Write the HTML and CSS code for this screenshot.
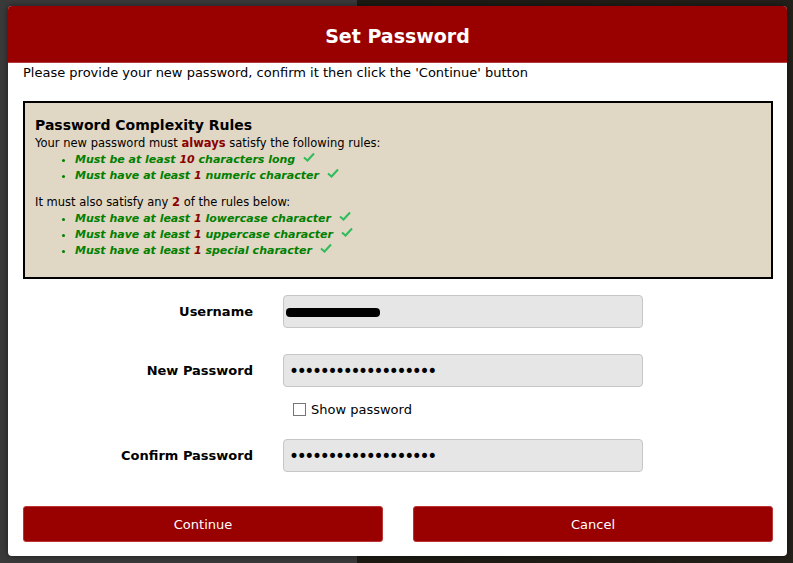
FILE: index.html
```html
<!DOCTYPE html>
<html>
<head>
<meta charset="utf-8">
<link rel="stylesheet" href="styles.css">
</head>
<body>
<div class="backdrop">
  <div class="dialog">
    <div class="dialog-header">Set Password</div>
    <div class="dialog-body">
      <p class="intro">Please provide your new password, confirm it then click the 'Continue' button</p>
      <div class="rules">
        <h3 class="rules-title">Password Complexity Rules</h3>
        <p class="rules-text">Your new password must <b class="hl">always</b> satisfy the following rules:</p>
        <ul class="rule-list">
          <li>Must be at least <span class="num">10</span> characters long <svg class="check" viewBox="0 0 12 10"><path d="M1 5.5 L4.5 8.5 L11 1.5"/></svg></li>
          <li>Must have at least <span class="num">1</span> numeric character <svg class="check" viewBox="0 0 12 10"><path d="M1 5.5 L4.5 8.5 L11 1.5"/></svg></li>
        </ul>
        <p class="rules-text gap">It must also satisfy any <b class="hl">2</b> of the rules below:</p>
        <ul class="rule-list">
          <li>Must have at least <span class="num">1</span> lowercase character <svg class="check" viewBox="0 0 12 10"><path d="M1 5.5 L4.5 8.5 L11 1.5"/></svg></li>
          <li>Must have at least <span class="num">1</span> uppercase character <svg class="check" viewBox="0 0 12 10"><path d="M1 5.5 L4.5 8.5 L11 1.5"/></svg></li>
          <li>Must have at least <span class="num">1</span> special character <svg class="check" viewBox="0 0 12 10"><path d="M1 5.5 L4.5 8.5 L11 1.5"/></svg></li>
        </ul>
      </div>
      <div class="form">
        <div class="row row-user">
          <label class="label">Username</label>
          <div class="field"><span class="redact"></span></div>
        </div>
        <div class="row row-new">
          <label class="label">New Password</label>
          <input class="field pw" type="password" value="aaaaaaaaaaaaaaaaaaa">
        </div>
        <div class="row row-show">
          <div class="label"></div>
          <label class="show"><span class="box"></span>Show password</label>
        </div>
        <div class="row row-confirm">
          <label class="label">Confirm Password</label>
          <input class="field pw" type="password" value="aaaaaaaaaaaaaaaaaaa">
        </div>
      </div>
      <div class="buttons">
        <button class="btn">Continue</button>
        <button class="btn">Cancel</button>
      </div>
    </div>
  </div>
</div>
</body>
</html>
```
FILE: styles.css
```css
html, body {
  margin: 0;
  padding: 0;
}
body {
  width: 793px;
  height: 563px;
  overflow: hidden;
  background: linear-gradient(to right, #3a3a3a 0, #3a3a3a 45%, #1c1a13 45%, #24201a 100%);
  font-family: "DejaVu Sans", Verdana, sans-serif;
}
.backdrop {
  padding: 6px 6px 0 8px;
}
.dialog {
  width: 779px;
  height: 550px;
  background: #fff;
  border-radius: 4px;
  overflow: hidden;
  box-shadow: 0 0 6px rgba(0,0,0,0.5);
}
.dialog-header {
  height: 57px;
  background: #990000;
  color: #fff;
  font-weight: bold;
  font-size: 19px;
  line-height: 61px;
  text-align: center;
  border-bottom: 1px solid #b23a3a;
  box-sizing: border-box;
}
.dialog-body {
  padding: 2px 14px 0 15px;
}
.intro {
  margin: 0;
  font-size: 13px;
  line-height: 16px;
  color: #000;
}
.rules {
  margin-top: 20px;
  height: 178px;
  box-sizing: border-box;
  border: 2px solid #000;
  background: #e0d7c4;
  padding: 12px 10px 0 10px;
}
.rules-title {
  margin: 0;
  font-size: 14px;
  line-height: 20px;
  font-weight: bold;
  color: #000;
}
.rules-text {
  margin: 0;
  font-size: 11.5px;
  line-height: 16px;
  color: #000;
}
.rules-text.gap {
  margin-top: 11px;
}
.hl {
  color: #8b0000;
}
.rule-list {
  margin: 0;
  padding-left: 40px;
  font-size: 11px;
  line-height: 16px;
  font-weight: bold;
  font-style: italic;
  color: #008000;
}
.rule-list li {
  height: 16px;
  box-sizing: border-box;
  padding-top: 1px;
}
.num {
  color: #8b0000;
}
.check {
  width: 12px;
  height: 10px;
  margin-left: 4px;
  vertical-align: 1px;
}
.check path {
  fill: none;
  stroke: #2ebd5a;
  stroke-width: 2;
}
.form {
  display: flex;
  flex-direction: column;
}
.row {
  display: flex;
  align-items: center;
  gap: 30px;
}
.row-user { margin-top: 16px; }
.row-new { margin-top: 26px; }
.row-show { margin-top: 14px; height: 16px; }
.row-confirm { margin-top: 22px; }
.label {
  width: 230px;
  text-align: right;
  font-size: 13px;
  font-weight: bold;
  color: #000;
}
.field {
  width: 360px;
  height: 33px;
  box-sizing: border-box;
  background: #e6e6e6;
  border: 1px solid #c6c6c6;
  border-radius: 4px;
  padding: 0 6px;
  font-family: "DejaVu Sans", Verdana, sans-serif;
  font-size: 13px;
  color: #000;
  display: flex;
  align-items: center;
  outline: none;
}
.field.pw {
  font-size: 17px;
  letter-spacing: -2.35px;
  padding-left: 5px;
}
.redact {
  display: block;
  width: 94px;
  height: 9px;
  margin-left: -4px;
  margin-top: 2px;
  background: #000;
  border-radius: 4px;
}
.show {
  display: flex;
  align-items: center;
  font-size: 13px;
  color: #000;
  margin-left: 10px;
}
.show .box {
  width: 11px;
  height: 11px;
  border: 1px solid #767676;
  background: #fff;
  margin-right: 5px;
}
.buttons {
  margin-top: 34px;
  display: flex;
  gap: 30px;
}
.btn {
  width: 360px;
  height: 36px;
  background: #990000;
  border: 1px solid #b33;
  border-radius: 3px;
  color: #fff;
  font-family: "DejaVu Sans", sans-serif;
  font-size: 13px;
  padding: 0;
}
```
